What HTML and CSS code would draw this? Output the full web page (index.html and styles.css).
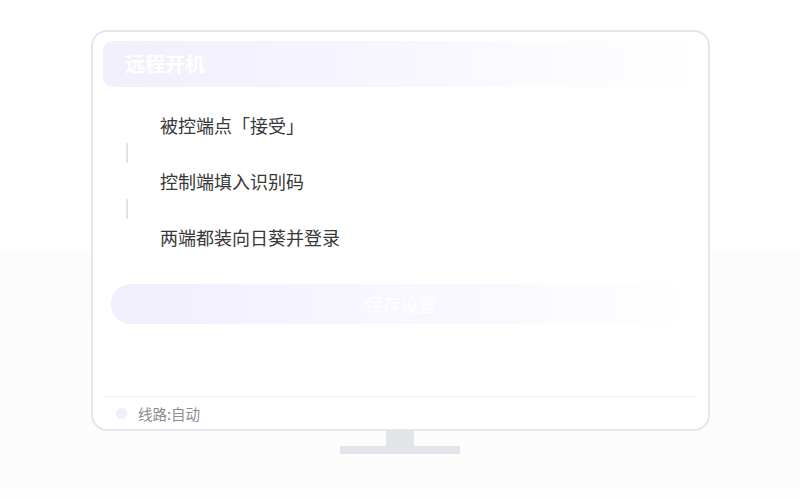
FILE: index.html
```html
<!DOCTYPE html>
<html lang="zh">
<head>
<meta charset="utf-8">
<link rel="stylesheet" href="styles.css">
</head>
<body>
<div class="scene">
  <div class="monitor">
    <div class="header">远程开机</div>
    <div class="steps">
      <div class="step">被控端点「接受」</div>
      <div class="connector"></div>
      <div class="step">控制端填入识别码</div>
      <div class="connector"></div>
      <div class="step">两端都装向日葵并登录</div>
    </div>
    <div class="save">保存设置</div>
    <div class="spacer"></div>
    <div class="footer"><span class="dot"></span><span class="route">线路:自动</span></div>
  </div>
  <div class="neck"></div>
  <div class="base"></div>
</div>
</body>
</html>
```

FILE: styles.css
```css
html, body {
  margin: 0;
  padding: 0;
}
body {
  width: 800px;
  height: 500px;
  overflow: hidden;
  font-family: "Noto Sans CJK SC", "Noto Sans", sans-serif;
  background: linear-gradient(to bottom, #ffffff 0%, #ffffff 49%, #fcfcfd 51%, #fdfdfe 100%);
}
.scene {
  padding-top: 30px;
  display: flex;
  flex-direction: column;
  align-items: center;
}
.monitor {
  box-sizing: border-box;
  width: 619px;
  height: 401px;
  margin-left: 1px;
  border: 2px solid #e3e6eb;
  border-radius: 16px;
  background: #ffffff;
  padding: 9px 10px 0;
  display: flex;
  flex-direction: column;
}
.header {
  height: 46px;
  line-height: 46px;
  border-radius: 10px;
  padding-left: 22px;
  font-size: 20px;
  font-weight: 700;
  color: #ffffff;
  background: linear-gradient(to right, #f2effd 0%, #f6f4fe 40%, #fbfbff 75%, #ffffff 100%);
}
.steps {
  margin-top: 26px;
  padding-left: 57px;
  display: flex;
  flex-direction: column;
}
.step {
  height: 24px;
  line-height: 24px;
  font-size: 18px;
  color: #383838;
}
.connector {
  width: 2px;
  height: 20px;
  margin: 6px 0 6px -34px;
  background: #e1e3e8;
}
.save {
  margin: 35px 8px 0 8px;
  height: 40px;
  line-height: 40px;
  border-radius: 20px;
  text-align: center;
  font-size: 18px;
  color: #ffffff;
  background: linear-gradient(to right, #f1eefd 0%, #f7f5fe 40%, #fbfaff 75%, #ffffff 100%);
}
.spacer {
  flex: 1;
}
.footer {
  margin: 0 1px;
  height: 32px;
  border-top: 1px solid #eef0f3;
  display: flex;
  align-items: center;
  padding-left: 12px;
}
.dot {
  width: 11px;
  height: 11px;
  border-radius: 50%;
  background: #f0edfc;
}
.route {
  margin-left: 11px;
  font-size: 14.5px;
  color: #8a8e96;
}
.neck {
  width: 28px;
  height: 15px;
  background: #e1e4e9;
}
.base {
  width: 120px;
  height: 8px;
  background: #e1e4e9;
}
```
